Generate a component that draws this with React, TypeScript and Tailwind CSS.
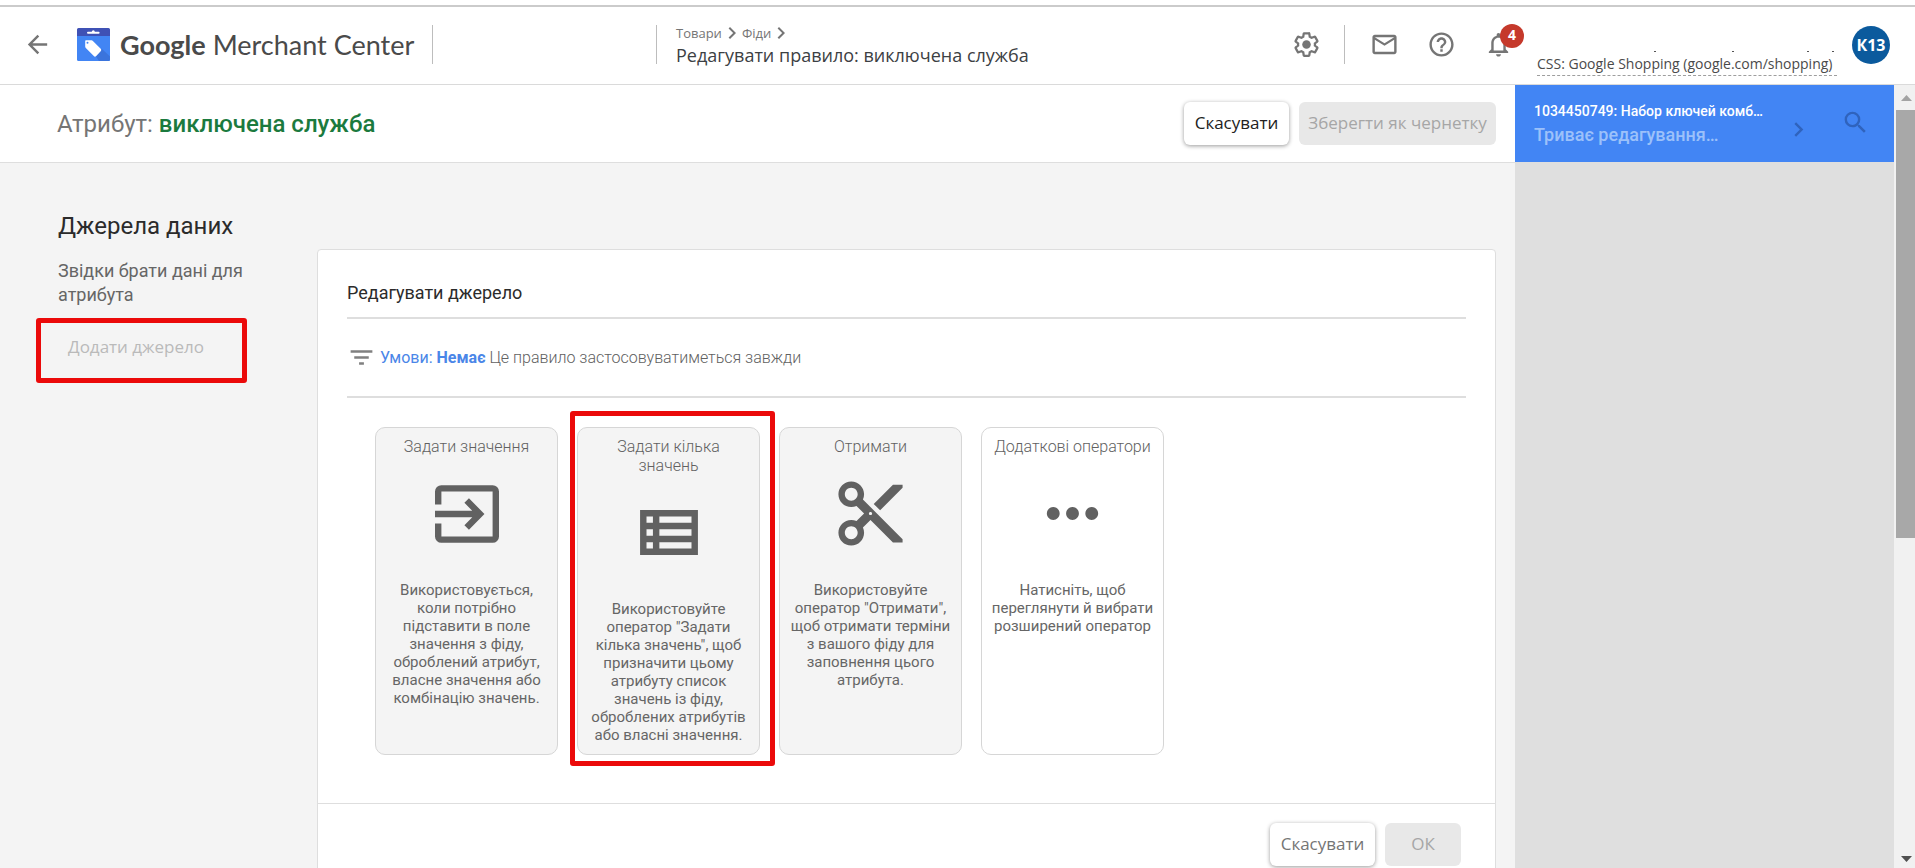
import type { ReactNode } from "react";
import {
  MdArrowBack,
  MdChevronRight,
  MdContentCut,
  MdFilterList,
  MdHelpOutline,
  MdMailOutline,
  MdMoreHoriz,
  MdNotificationsNone,
  MdSearch,
} from "react-icons/md";

const MerchantLogo = () => (
  <svg className="w-[33px] h-[33px]" viewBox="0 0 33 33" aria-hidden="true">
    <path d="M0 8h33v23.500a1.500 1.500 0 0 1-1.500 1.500h-30A1.500 1.500 0 0 1 0 31.500z" fill="#4285f4" />
    <path d="M24.500 20.500 33 28.500v3a1.500 1.500 0 0 1-1.500 1.500H22l-3-4.500z" fill="#3b74dc" />
    <path d="M1.500 0h30A1.500 1.500 0 0 1 33 1.500V8H0V1.500A1.500 1.500 0 0 1 1.500 0z" fill="#3f51b5" />
    <path
      d="M11 3.700h3.800a1.500 1.500 0 0 1 3 0H21.600a1 1 0 0 1 0 2H11a1 1 0 0 1 0-2z"
      fill="#fff"
    />
    <path
      d="M8.900 12.300h5.600c.5 0 1 .2 1.400.6l7.800 7.900c.7.800.7 1.700 0 2.400l-4.500 4.900c-.7.700-1.700.7-2.400 0l-8-8.200a2 2 0 0 1-.6-1.400v-5.300c0-.6.200-.9.700-.9zm1.600 1.400a1 1 0 1 0 0 2 1 1 0 0 0 0-2z"
      fill="#fff"
      fillRule="evenodd"
    />
  </svg>
);

const GearIcon = () => (
  <svg className="w-[27px] h-[27px]" viewBox="0 0 24 24" fill="none" aria-hidden="true">
    <path
      d="M19.430 12.980c.04-.32.07-.64.07-.98 0-.34-.03-.66-.07-.98l2.110-1.650c.19-.15.24-.42.12-.64l-2-3.460a.5.5 0 0 0-.61-.22l-2.490 1c-.52-.4-1.080-.73-1.690-.98l-.38-2.650A.488.488 0 0 0 14 2h-4c-.25 0-.46.18-.49.42l-.38 2.650c-.61.25-1.170.59-1.690.98l-2.490-1a.5.5 0 0 0-.61.22l-2 3.460c-.13.22-.07.49.12.64l2.110 1.650c-.04.32-.07.65-.07.98 0 .33.03.66.07.98l-2.110 1.650c-.19.15-.24.42-.12.64l2 3.460a.5.5 0 0 0 .61.22l2.490-1c.52.4 1.080.73 1.690.98l.38 2.650c.03.24.24.42.49.42h4c.25 0 .46-.18.49-.42l.38-2.650c.61-.25 1.170-.59 1.690-.98l2.490 1a.5.5 0 0 0 .61-.22l2-3.460c.12-.22.07-.49-.12-.64z"
      stroke="currentColor"
      strokeWidth="2"
    />
    <circle cx="12" cy="12" r="3.800" fill="currentColor" />
  </svg>
);

const SetValueIcon = () => (
  <svg className="w-[64px] h-[58px]" viewBox="0 0 20 18" fill="none" stroke="currentColor" strokeWidth="2" aria-hidden="true">
    <path d="M1 6V2a1 1 0 0 1 1-1h16a1 1 0 0 1 1 1v14a1 1 0 0 1-1 1H2a1 1 0 0 1-1-1v-4" />
    <path d="M0 9h13.500M9.900 4.800 14.050 9 9.900 13.200" />
  </svg>
);

const SetMultipleIcon = () => (
  <svg className="w-[58px] h-[45px]" viewBox="0 0 18 14" aria-hidden="true">
    <path
      d="M0 0h18v14H0zM2 2v2h2V2zM6 2v2h10V2zM2 6v2h2V6zM6 6v2h10V6zM2 10v2h2v-2zM6 10v2h10v-2z"
      fill="currentColor"
      fillRule="evenodd"
    />
  </svg>
);

const operators = [
  {
    title: "Задати значення",
    icon: <SetValueIcon />,
    text: "Використовується, коли потрібно підставити в поле значення з фіду, оброблений атрибут, власне значення або комбінацію значень.",
  },
  {
    title: "Задати кілька значень",
    icon: <SetMultipleIcon />,
    text: 'Використовуйте оператор "Задати кілька значень", щоб призначити цьому атрибуту список значень із фіду, оброблених атрибутів або власні значення.',
    marked: true,
  },
  {
    title: "Отримати",
    icon: <MdContentCut className="w-[77px] h-[77px]" />,
    text: 'Використовуйте оператор "Отримати", щоб отримати терміни з вашого фіду для заповнення цього атрибута.',
  },
  {
    title: "Додаткові оператори",
    icon: <MdMoreHoriz className="w-[77px] h-[77px]" />,
    text: "Натисніть, щоб переглянути й вибрати розширений оператор",
    plain: true,
  },
];

const RaisedButton = ({ children, muted }: { children: ReactNode; muted?: boolean }) => (
  <button
    className={`h-[43px] w-[105px] rounded-md bg-white pb-0.5 font-['Open_Sans',sans-serif] text-[17px] shadow-[0_1px_4px_rgba(0,0,0,0.4)] ${
      muted ? "text-[#757575]" : "text-[#212121]"
    }`}
  >
    {children}
  </button>
);

const Divider = () => <div className="h-[39px] w-px shrink-0 bg-[#bdbdbd]" />;

function Header() {
  return (
    <header className="flex h-[78px] shrink-0 items-center border-b border-[#dadada] pr-[25px] pb-0.5 pl-[23px] font-['Open_Sans',sans-serif] text-[#757575]">
      <button aria-label="Назад">
        <MdArrowBack className="w-[29px] h-[29px]" />
      </button>
      <a href="#" className="ml-[25px] flex items-center gap-[10px]">
        <MerchantLogo />
        <span className="w-[297px] pt-0.5 font-['Lato',sans-serif] text-[27px] whitespace-nowrap text-[#4a4a4a]">
          <b>Google</b> Merchant Center
        </span>
      </a>
      <div className="ml-[15px] flex w-[224px]">
        <Divider />
      </div>
      <Divider />
      <div className="ml-[19px]">
        <nav className="flex h-5 items-center text-[13px] leading-5">
          <a href="#">Товари</a>
          <MdChevronRight className="-mx-0.5 w-6 h-6" />
          <a href="#">Фіди</a>
          <MdChevronRight className="-mx-0.5 w-6 h-6" />
        </nav>
        <h1 className="text-lg leading-6 text-[#3c4043]">Редагувати правило: виключена служба</h1>
      </div>

      <div className="ml-auto flex items-center">
        <button aria-label="Налаштування" className="mr-6">
          <GearIcon />
        </button>
        <Divider />
        <div className="ml-[25px] flex gap-7">
          <button aria-label="Пошта">
            <MdMailOutline className="w-[29px] h-[29px]" />
          </button>
          <button aria-label="Довідка">
            <MdHelpOutline className="w-[29px] h-[29px]" />
          </button>
          <button aria-label="Сповіщення" className="relative">
            <MdNotificationsNone className="w-[29px] h-[29px]" />
            <span className="absolute -top-[6px] left-4 flex h-6 w-6 items-center justify-center rounded-full bg-[#c5392b] pb-0.5 text-sm leading-4 font-bold text-white">
              4
            </span>
          </button>
        </div>
        <div className="ml-6 flex w-[300px] flex-col pt-[38px]">
          {/* descenders of the hidden account line */}
          <svg className="w-[300px] h-[2px]" viewBox="0 0 300 2" fill="#555" aria-hidden="true">
            <path d="M117 0h2v1h-2zM195 0h2v1h-2zM270 0h2v1h-2zM295 0h2v1h-2z" />
          </svg>
          <a href="#" className="border-b border-dashed border-[#9e9e9e] text-sm leading-[22px] whitespace-nowrap text-[#4a4a4a]">
            CSS: Google Shopping (google.com/shopping)
          </a>
        </div>
        <button className="ml-[15px] h-[38px] w-[38px] rounded-full bg-[#0b5a9d] text-base font-bold text-white">
          К13
        </button>
      </div>
    </header>
  );
}

function OperatorCard({ title, icon, text, plain, marked }: (typeof operators)[number]) {
  return (
    <div className="relative">
      <button
        className={`flex h-full w-[183px] flex-col items-center rounded-[10px] border border-[#d6d6d6] px-[9px] pt-[9px] pb-[10px] ${
          plain ? "bg-white" : "bg-[#f4f4f4]"
        }`}
      >
        <span className="text-base leading-[19px] font-light text-[#616161]">{title}</span>
        <span className="mt-[19px] flex h-[77px] items-center justify-center text-[#616161]">{icon}</span>
        <span className="mt-[29px] text-[15px] leading-[18px] text-[#666]">{text}</span>
      </button>
      {marked && (
        <div className="pointer-events-none absolute -top-4 -right-[15px] -bottom-[11px] -left-[7px] rounded-[3px] border-5 border-[#eb0a0a]" />
      )}
    </div>
  );
}

function SourceEditor() {
  return (
    <section className="mt-[86px] mr-[19px] flex-1 rounded-t border border-[#dedede] bg-white">
      <div className="px-[29px] pb-12">
        <h3 className="border-b-2 border-[#dedede] pt-[31px] pb-3 text-lg leading-6 text-[#2b2b2b]">Редагувати джерело</h3>
        <div className="flex h-[79px] items-center gap-1 border-b-2 border-[#dedede] text-base text-[#808080]">
          <MdFilterList className="w-[29px] h-[29px]" />
          <p>
            <a href="#" className="text-[#4a86e8]">
              Умови: <b>Немає</b>
            </a>{" "}
            <span className="font-light text-[#616161]">Це правило застосовуватиметься завжди</span>
          </p>
        </div>
        <div className="mt-[29px] flex gap-[19px] pl-7">
          {operators.map((op) => (
            <OperatorCard key={op.title} {...op} />
          ))}
        </div>
      </div>
      <div className="flex h-24 justify-end gap-[10px] border-t border-[#dedede] pt-[19px] pr-[34px]">
        <RaisedButton muted>Скасувати</RaisedButton>
        <button
          disabled
          className="h-[43px] w-[76px] rounded-md bg-[#e8e8e8] pb-0.5 font-['Open_Sans',sans-serif] text-[17px] text-[#a6a6a6]"
        >
          ОК
        </button>
      </div>
    </section>
  );
}

function PreviewPanel() {
  return (
    <aside className="w-[379px] shrink-0 bg-[#dfdfdf]">
      <div className="flex h-[77px] items-center bg-[#4285f4] pr-6 pb-0.5 pl-[19px] font-medium">
        <div className="w-[234px] whitespace-nowrap">
          <p className="text-sm leading-6 text-white">1034450749: Набор ключей комб…</p>
          <p className="text-lg leading-6 text-[#9cc1fa]">Триває редагування…</p>
        </div>
        <button aria-label="Далі" className="mt-[14px] ml-4 text-[#2f63bd]">
          <MdChevronRight className="w-[29px] h-[29px]" />
        </button>
        <button aria-label="Пошук" className="ml-auto text-[#2f63bd]">
          <MdSearch className="w-[29px] h-[29px]" />
        </button>
      </div>
    </aside>
  );
}

function ScrollTrack() {
  return (
    <div className="flex w-[21px] shrink-0 flex-col items-center bg-[#f1f1f1]">
      <div className="flex h-[25px] w-full shrink-0 items-center justify-center pl-1">
        <svg className="w-[11px] h-[6px]" viewBox="0 0 11 6" fill="#a3a3a3" aria-hidden="true">
          <path d="M5.500 0 11 6H0z" />
        </svg>
      </div>
      <div className="w-[19px] grow-[428] self-end bg-[#a8a8a8]" />
      <div className="flex w-full grow-[318] items-end justify-center pb-[6px] pl-1">
        <svg className="w-[11px] h-[6px]" viewBox="0 0 11 6" fill="#505050" aria-hidden="true">
          <path d="M0 0h11L5.500 6z" />
        </svg>
      </div>
    </div>
  );
}

export default function App() {
  return (
    <div className="flex h-screen flex-col overflow-hidden bg-white font-['Roboto',sans-serif]">
      <div className="h-[7px] shrink-0 border-b-2 border-[#cbcbcb]" />
      <Header />
      <div className="flex min-h-0 flex-1">
        <main className="flex min-w-0 flex-1 flex-col">
          <div className="flex h-[78px] shrink-0 items-center gap-[10px] border-b border-[#dedede] pr-[19px] pl-[57px]">
            <h2 className="mr-auto text-2xl text-[#757575]">
              Атрибут: <span className="font-medium text-[#1b7a3e]">виключена служба</span>
            </h2>
            <RaisedButton>Скасувати</RaisedButton>
            <button
              disabled
              className="h-[43px] w-[197px] rounded-md bg-[#e8e8e8] pb-0.5 font-['Open_Sans',sans-serif] text-[17px] text-[#a6a6a6]"
            >
              Зберегти як чернетку
            </button>
          </div>
          <div className="flex min-h-0 flex-1 items-start overflow-hidden bg-[#f4f4f4]">
            <div className="w-[317px] shrink-0 pt-12 pr-16 pl-[58px]">
              <h2 className="text-2xl leading-[30px] text-[#2b2b2b]">Джерела даних</h2>
              <p className="mt-[18px] text-lg leading-6 text-[#666]">Звідки брати дані для атрибута</p>
              <div className="relative mt-[19px] w-fit">
                <button
                  disabled
                  className="h-[43px] px-[10px] pb-0.5 font-['Open_Sans',sans-serif] text-[17px] whitespace-nowrap text-[#bababa]"
                >
                  Додати джерело
                </button>
                <div className="pointer-events-none absolute -top-2 -right-[33px] -bottom-[14px] -left-[22px] rounded-[3px] border-5 border-[#eb0a0a]" />
              </div>
            </div>
            <SourceEditor />
          </div>
        </main>
        <PreviewPanel />
        <ScrollTrack />
      </div>
    </div>
  );
}
